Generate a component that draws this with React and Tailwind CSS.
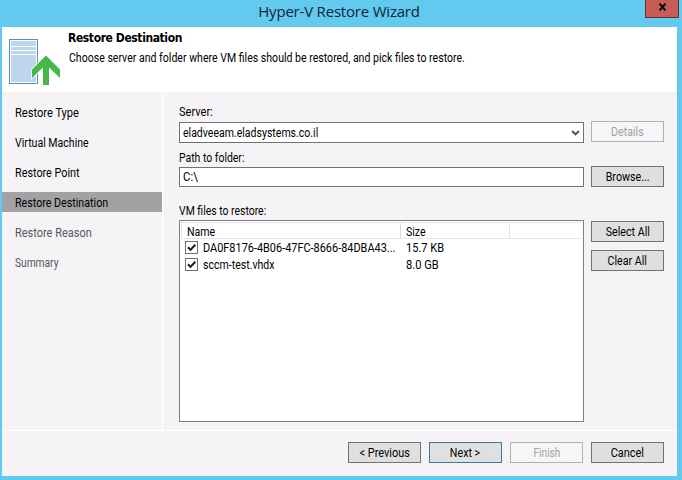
import React from "react";

const STEPS = [
  { label: "Restore Type", fit: "scale-x-[0.925]" },
  { label: "Virtual Machine", fit: "scale-x-[0.88]" },
  { label: "Restore Point", fit: "scale-x-[0.90]" },
  { label: "Restore Destination", active: true, fit: "scale-x-[0.89]" },
  { label: "Restore Reason", pending: true, fit: "scale-x-[0.915]" },
  { label: "Summary", pending: true, fit: "scale-x-[0.85]" },
];

const FILES = [
  { name: "DA0F8176-4B06-47FC-8666-84DBA43...", size: "15.7 KB", fit: "scale-x-[0.91]", sizeFit: "scale-x-[0.92]" },
  { name: "sccm-test.vhdx", size: "8.0 GB", fit: "scale-x-[0.88]", sizeFit: "scale-x-[0.93]" },
];

function Text({ children, fit = "" }) {
  return <span className={`inline-block origin-left whitespace-nowrap ${fit}`}>{children}</span>;
}

function Button({ children, disabled, primary, fit = "scale-x-[0.89]", className = "" }) {
  const look = disabled
    ? "border-[#b2b0b3] bg-[#f7f5f8] text-[#a3a1a5]"
    : primary
      ? "border-[#42779f] bg-[#e0e0e0] text-black"
      : "border-[#747176] bg-[#e0dfe0] text-black";
  return (
    <button
      disabled={disabled}
      className={`flex h-[21px] w-[73px] shrink-0 items-center justify-center border pt-px leading-none ${look} ${className}`}
    >
      <span className={`inline-block ${fit}`}>{children}</span>
    </button>
  );
}

function ServerIcon() {
  return (
    <svg width="53" height="49" viewBox="0 0 53 49" className="block">
      <rect x="0.5" y="0.5" width="28" height="44" fill="#fff" stroke="#5b8fae" />
      <rect x="2" y="2" width="25" height="41" fill="#bdd6ed" />
      <path d="M2 7.5h25M2 11.5h25M2 15.5h25" stroke="#fff" strokeWidth="1.2" />
      <path
        d="M37 16.5L51 30.500v8.500L40 28.500v17.500h-6V28.500L23 39V30.500z"
        fill="#49b649"
        stroke="#fff"
        strokeWidth="1.500"
        paintOrder="stroke"
      />
    </svg>
  );
}

function Checkbox() {
  return (
    <svg width="13" height="13" viewBox="0 0 13 13" className="block shrink-0">
      <rect x="0.5" y="0.5" width="12" height="12" fill="#fff" stroke="#706e72" />
      <path d="M3 6.200L5.500 8.900L10.300 3.700" fill="none" stroke="#1c1b1d" strokeWidth="2" />
    </svg>
  );
}

export default function App() {
  return (
    <div className="flex h-[480px] w-[682px] flex-col overflow-hidden bg-[#62c9ef] pr-[5px] pb-1 pl-0.5 font-[Roboto,sans-serif] text-[12px] leading-none text-black">
      <header className="flex h-[27px] shrink-0 items-start">
        <h1 className="w-[642px] pt-[3px] pl-[32px] text-center font-['Open_Sans',sans-serif] text-[15px] leading-[16px] font-normal tracking-[-0.2px] text-[#10243a]">
          Hyper-V Restore Wizard
        </h1>
        <button className="-mr-2 ml-[1px] flex h-[18px] w-[34px] shrink-0 justify-center border border-t-0 border-[#5c3440] bg-[#c75c56] pt-[3px]">
          <svg width="9" height="8" viewBox="0 0 9 8">
            <path d="M1.500 0.500L7.500 7.500M7.500 0.500L1.500 7.500" stroke="#140a0c" strokeWidth="2" />
          </svg>
        </button>
      </header>

      <section className="flex h-[65px] shrink-0 bg-white pt-3 pl-[7px]">
        <ServerIcon />
        <div className="-mt-[8px] pl-[6px]">
          <h2 className="font-['DejaVu_Sans_Condensed','DejaVu_Sans',sans-serif] text-[12px] leading-[14px] font-bold tracking-[-0.400px]">
            Restore Destination
          </h2>
          <p className="pt-[6px] pl-px leading-[14px]">
            <Text fit="scale-x-[0.88]">
              Choose server and folder where VM files should be restored, and pick files to restore.
            </Text>
          </p>
        </div>
      </section>

      <main className="flex h-[338px] shrink-0 bg-[#f6f3f7]">
        <nav className="flex w-[161px] shrink-0 flex-col gap-[10px] border-r border-white pt-[10px]">
          {STEPS.map((s) => (
            <div
              key={s.label}
              className={`flex h-5 items-center pt-[2px] pl-[13px] ${s.active ? "bg-[#a3a1a4]" : ""} ${s.pending ? "text-[#59575b]" : ""}`}
            >
              <Text fit={s.fit}>{s.label}</Text>
            </div>
          ))}
        </nav>

        <div className="flex w-[421px] shrink-0 flex-col pl-4">
          <label className="h-[30px] pt-[14px]">
            <Text fit="scale-x-[0.92]">Server:</Text>
          </label>
          <div className="flex h-[21px] w-[405px] items-center justify-between border border-[#747176] bg-white pr-[3px] pl-[3px]">
            <Text fit="scale-x-[0.877]">eladveeam.eladsystems.co.il</Text>
            <svg width="9" height="6" viewBox="0 0 9 6">
              <path d="M1 1L4.500 4.300L8 1" fill="none" stroke="#555358" strokeWidth="2" />
            </svg>
          </div>
          <label className="h-[24px] pt-[9px]">
            <Text fit="scale-x-[0.87]">Path to folder:</Text>
          </label>
          <div className="flex h-5 w-[405px] items-center border border-[#747176] bg-white pl-[3px]">
            <Text fit="scale-x-[0.95]">C:\</Text>
          </div>
          <label className="h-[33px] pt-[18px]">
            <Text fit="scale-x-[0.87]">VM files to restore:</Text>
          </label>
          <div className="h-[202px] w-[405px] border border-[#817e84] bg-white p-px">
            <div className="flex h-[17px] border-t border-b border-l border-[#e7e5e7]">
              <span className="flex w-[219px] items-center border-r border-[#dddbdd] pt-[2px] pl-[5px]">
                <Text fit="scale-x-[0.88]">Name</Text>
              </span>
              <span className="flex w-[109px] items-center border-r border-[#e4e2e4] pt-[2px] pl-[5px]">
                <Text fit="scale-x-[0.88]">Size</Text>
              </span>
            </div>
            <div className="flex flex-col gap-1 pt-[2px] pl-1">
              {FILES.map((f) => (
                <div key={f.name} className="flex h-[13px] items-center">
                  <Checkbox />
                  <span className="w-[208px] shrink-0 pl-[5px]">
                    <Text fit={f.fit}>{f.name}</Text>
                  </span>
                  <Text fit={f.sizeFit}>{f.size}</Text>
                </div>
              ))}
            </div>
          </div>
        </div>

        <div className="flex flex-col pt-[29px] pl-[7px]">
          <Button disabled>Details</Button>
          <Button className="mt-6">Browse...</Button>
          <Button className="mt-[34px]">Select All</Button>
          <Button className="mt-2">Clear All</Button>
        </div>
      </main>

      <footer className="flex h-[46px] shrink-0 justify-end gap-2 border-t border-white bg-[#f6f3f7] pt-[11px] pr-[13px]">
        <Button fit="scale-x-[0.91]">&lt; Previous</Button>
        <Button primary>Next &gt;</Button>
        <Button disabled fit="scale-x-[0.84]">Finish</Button>
        <Button fit="scale-x-[0.91]">Cancel</Button>
      </footer>
    </div>
  );
}
